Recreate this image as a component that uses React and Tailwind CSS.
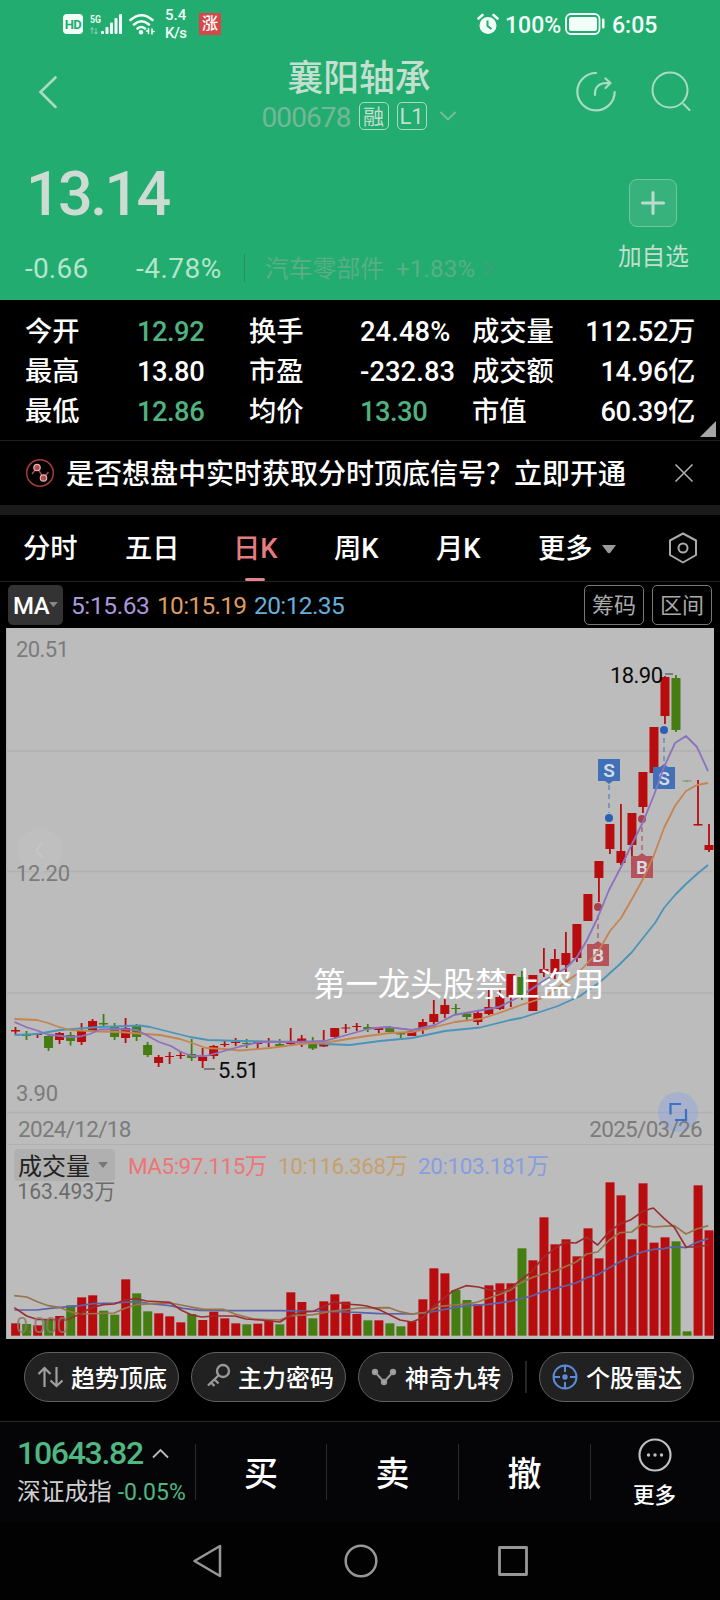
import React from 'react';

// [color, high, body top, body bottom, low]
const candles = [
  ['r', 1027, 1030, 1031.5, 1034], ['g', 1031, 1035, 1036, 1040], ['r', 1033, 1033.5, 1035, 1038],
  ['g', 1035, 1036, 1048, 1051], ['r', 1032, 1033, 1040, 1044], ['g', 1032, 1035, 1041, 1045.5],
  ['r', 1023, 1031, 1042, 1045], ['r', 1019, 1021, 1031, 1032], ['g', 1014, 1023, 1024.5, 1026],
  ['g', 1023, 1026, 1037, 1040], ['r', 1018, 1028, 1038, 1043], ['g', 1024, 1026, 1037, 1041],
  ['g', 1042, 1045, 1055, 1057], ['r', 1055, 1057, 1063, 1067], ['r', 1052, 1056, 1057, 1064],
  ['r', 1051, 1055, 1056, 1059], ['g', 1039, 1054, 1058, 1061], ['r', 1048, 1057, 1061, 1068],
  ['r', 1045, 1046, 1056, 1059], ['r', 1041, 1044, 1045, 1047], ['r', 1038, 1042, 1043, 1046],
  ['g', 1039, 1043, 1044, 1048], ['r', 1041, 1042, 1044, 1049], ['r', 1038, 1041.5, 1043, 1047],
  ['g', 1039, 1044, 1046, 1046], ['r', 1028, 1041, 1044, 1045], ['r', 1035, 1038.5, 1041, 1047],
  ['g', 1037, 1043, 1048.5, 1050], ['r', 1030, 1044, 1046.5, 1047], ['r', 1028, 1028, 1037, 1039],
  ['r', 1024, 1027.5, 1028.5, 1033], ['r', 1023, 1026, 1027, 1031], ['g', 1024, 1027, 1029, 1032],
  ['r', 1027, 1028, 1030, 1033], ['g', 1026, 1028, 1032, 1033], ['g', 1032, 1033, 1034.5, 1038],
  ['r', 1030, 1031, 1036, 1036], ['r', 1019, 1022, 1030, 1034], ['r', 1000, 1014, 1022, 1024],
  ['r', 998, 1005, 1014, 1018], ['g', 1004, 1008, 1009, 1014], ['g', 1012, 1013.5, 1017, 1021],
  ['r', 1011, 1013, 1022, 1025], ['r', 990, 1007, 1014, 1015], ['r', 990, 997, 1009, 1010],
  ['r', 974, 974, 997, 1007], ['g', 971, 977, 997, 1000], ['r', 975, 975, 1011, 1011],
  ['r', 948, 969, 973, 977], ['r', 949, 959, 973, 979], ['r', 932, 953, 965, 973],
  ['r', 924, 924, 958, 962], ['r', 894, 894, 921, 921], ['r', 861, 861, 878, 902],
  ['r', 824, 824, 849, 854], ['r', 804, 851, 863, 865], ['r', 813, 813, 845, 871],
  ['r', 772, 772, 807, 813], ['r', 727, 727, 773, 775], ['r', 676, 677, 716, 724],
  ['g', 675, 678, 730, 732], ['g', 780.5, 780.5, 781.5, 781.5], ['r', 780, 824, 825.5, 825.5],
  ['r', 824, 845, 850, 852],
];

// top of each volume bar, the base line is 587
const volumes = [
  550, 552, 556, 540, 528, 496, 472, 466, 512, 524, 418, 460, 514, 520, 529, 547,
  522, 540, 515, 535, 550, 553, 551, 541, 553, 457, 486, 535, 484, 463, 485, 522,
  541, 541, 550, 559, 544, 478, 385, 400, 450, 480, 493, 436, 430, 430, 325, 361,
  232, 313, 298, 349, 265, 355, 127, 166, 298, 130, 308, 292, 304, 574, 136, 271,
];
const greenVolumes = [1, 3, 5, 8, 9, 11, 12, 16, 21, 24, 27, 32, 34, 35, 40, 41, 46, 60, 61];

const fill = { r: '#b80c0f', g: '#467d13' };

const ma5 = '14.5,1022 26,1027 37,1030.5 48,1034.5 70,1037 80,1036.5 90,1034 100,1029.5 118,1029 137,1030 148,1036 159,1042 171,1046 181,1052 192,1056 206,1056 217,1053 240,1046.5 260,1042 295,1042 325,1041 343,1036 370,1028.5 387,1027 412,1030 435,1025 454,1015 480,1010.5 499,1007 521,996 545,980 566,968 577,957 587,940 598,917 609,890 621,867 632,844 643,822 654,795 664,767 675,743 686,736 697,747 708,771';
const ma10 = '14.5,1019 37,1020 48,1023 59,1027 70,1030 100,1031.5 120,1032 145,1034 160,1035 180,1039 192,1043 206,1048 225,1049 240,1050.5 270,1048 300,1044 330,1042 360,1037 390,1033 412,1032 435,1027 455,1022 480,1019 499,1013 521,1005 543,998 560,986 577,974 598,952 610,931 621,918 632,899 643,879 654,855 664,828 675,806 686,791 697,785 708,783';
const ma20 = '14.5,1035 37,1034 60,1030 100,1027 140,1025.5 150,1027 170,1032 190,1037 208,1040 240,1041 300,1042 325,1044 350,1045 380,1041 412,1038 445,1031 480,1027.5 510,1020 521,1018 540,1012 558,1006 580,996 600,982 620,964 632,952 643,938 655,923 664,908 675,895 686,884 697,874 708,865';

const vol5 = '43,503 80,528 110,538 200,540 240,522 277,502 310,494 343,492 375,480 408,476 440,483 510,487 543,510 575,525 605,531 640,528 705,528 738,537 780,540 840,546 873,525 905,516 940,514 970,500 1003,485 1035,492 1080,495 1100,498 1135,508 1170,525 1200,540 1235,546 1265,535 1295,505 1330,475 1360,452 1398,437 1435,441 1465,449 1500,456 1530,445 1560,422 1595,395 1630,352 1665,325 1695,307 1728,309 1760,291 1793,315 1828,275 1860,252 1893,239 1930,213 1960,204 1992,235 2023,262 2058,321 2090,321 2125,315';
const vol10 = '43,467 80,471 112,485 145,497 178,502 210,515 240,522 343,519 375,505 408,494 460,491 510,489 543,495 610,508 670,508 705,522 760,537 840,540 873,527 940,524 1000,513 1080,504 1168,503 1200,515 1235,522 1280,517 1315,500 1360,495 1398,492 1430,487 1465,475 1500,463 1530,451 1560,430 1595,413 1630,402 1665,393 1695,380 1728,366 1760,342 1793,336 1828,300 1860,278 1895,276 1926,252 1960,261 2023,257 2058,282 2090,267 2125,257';
const vol20 = '43,510 110,510 150,505 240,497 280,491 343,489 408,485 460,492 510,497 550,505 600,511 690,512 840,512 905,513 1040,516 1080,518 1140,521 1235,522 1295,516 1350,505 1400,497 1465,493 1530,484 1595,468 1630,454 1665,446 1728,429 1760,413 1793,404 1828,383 1860,365 1926,336 1960,328 1992,326 2023,320 2058,323 2090,307 2125,296';

const StatusBar = () => (
  <div className="flex h-12 items-center pl-[63px] pr-[64px] text-[#f2fff9]">
    <div className="flex h-5 w-5 items-center justify-center rounded bg-[#f2fff9] text-[13px] font-bold leading-none tracking-[-0.5px] text-[#22ac6f]">HD</div>
    <svg className="ml-[6px]" width="34" height="24" viewBox="89 12 34 24" fill="#f2fff9">
      <text x="90" y="23" fontSize="11" fontWeight="600" textLength="11" lengthAdjust="spacingAndGlyphs">5G</text>
      <g opacity="0.45">
        <path d="M92 28v6M90.5 29.5l1.5-2 1.5 2M96 28v6M94.5 32l1.5 2 1.5-2" stroke="#f2fff9" strokeWidth="1" fill="none" />
      </g>
      <rect x="101" y="31" width="3" height="3" rx="1" />
      <rect x="105.500" y="27" width="3" height="7" rx="1" />
      <rect x="110" y="22.500" width="3" height="11.500" rx="1" />
      <rect x="114.500" y="18" width="3" height="16" rx="1" />
      <rect x="119" y="14" width="3" height="20" rx="1" />
    </svg>
    <svg className="ml-[5px]" width="28" height="24" viewBox="128 12 28 24" fill="none" stroke="#f2fff9" strokeWidth="2.600" strokeLinecap="round">
      <path d="M130.500 20Q141.500 10.500 152.500 20M134 24.500Q141.500 18 149 24.500M137.500 28.500Q141 25.500 145 28.500" />
      <circle cx="141" cy="32.300" r="1" fill="#f2fff9" />
      <path d="M148.500 28.500v5M152 29v5M146.500 31h1M153.500 31.500h.5" strokeWidth="1.600" />
    </svg>
    <div className="ml-[9px] w-[24px] text-[15px] font-medium leading-[18px]">
      <div>5.4</div>
      <div className="tracking-[-0.5px]">K/s</div>
    </div>
    <div className="ml-[10px] flex h-[22px] w-[22px] items-center justify-center bg-[#d6474a] text-[16px] font-medium leading-none text-white">涨</div>
    <div className="ml-auto flex items-center">
      <svg width="22" height="22" viewBox="0 0 22 22">
        <circle cx="11" cy="12.500" r="8.500" fill="#f2fff9" />
        <path d="M1.500 5.500L5.500 2M20.500 5.500L16.500 2" stroke="#f2fff9" strokeWidth="2.600" strokeLinecap="round" />
        <path d="M10.500 7.500v5.500l4 3" stroke="#22ac6f" strokeWidth="2" fill="none" />
      </svg>
      <span className="ml-[6px] mt-[2px] w-[55px] whitespace-nowrap text-[23px] font-medium leading-none">100%</span>
      <svg className="ml-[5px]" width="41" height="22" viewBox="0 0 41 22">
        <rect x="1" y="1" width="33.500" height="20" rx="5" fill="none" stroke="#f2fff9" strokeWidth="1.800" />
        <rect x="4" y="4" width="28" height="14" rx="2.500" fill="#f2fff9" />
        <rect x="37" y="5.500" width="2.500" height="10" rx="1" fill="#f2fff9" />
      </svg>
      <span className="ml-[6px] mt-[2px] w-[44px] text-[23px] font-medium leading-none">6:05</span>
    </div>
  </div>
);

const Header = () => (
  <header className="h-[300px] bg-[#22ac6f] text-[#c3dfd0]">
    <StatusBar />
    <div className="flex h-[88px] justify-between pl-[38px] pr-[28px]">
      <svg className="mt-7" width="20" height="34" viewBox="38 76 20 34" fill="none" stroke="#a9dcc3" strokeWidth="2.600" strokeLinecap="round">
        <path d="M55.500 77.500L40.500 92L55.500 107" />
      </svg>
      <div className="ml-[86px] flex flex-col items-center">
        <div className="mt-[13px] text-[35.8px] font-medium leading-[36px]">襄阳轴承</div>
        <div className="mt-[4px] flex h-[30px] items-center">
          <span className="mt-[3px] text-[28px] leading-none tracking-[-0.9px] text-[#74b798]">000678</span>
          <span className="ml-2 flex h-[28px] w-[30px] items-center justify-center rounded-[5px] border border-[#a9dcc3] pt-[2px] text-[21px] leading-none">融</span>
          <span className="ml-2 flex h-[28px] w-[30px] items-center justify-center rounded-[5px] border border-[#a9dcc3] pt-px text-[22px] leading-none">L1</span>
          <svg className="ml-3" width="18" height="12" viewBox="0 0 18 12" fill="none" stroke="#74bd9b" strokeWidth="1.800">
            <path d="M1.500 2L9 9.500L16.500 2" />
          </svg>
        </div>
      </div>
      <div className="flex">
        <svg className="mt-[20px]" width="44" height="46" viewBox="574 68 44 46" fill="none" stroke="#a9dcc3" strokeWidth="2.200" strokeLinecap="round" strokeLinejoin="round">
          <path d="M596 73A18.700 18.700 0 1 0 614.700 92" />
          <path d="M595 95C594.500 86 600 82.500 610 83M605.500 78.500L610.500 83L605.500 88" />
        </svg>
        <svg className="ml-8" width="42" height="66" viewBox="650 48 42 66" fill="none" stroke="#a9dcc3" strokeWidth="2" strokeLinecap="round">
          <circle cx="670" cy="90" r="17.500" />
          <path d="M683.500 104L689.500 110" />
        </svg>
      </div>
    </div>
    <div className="flex h-[164px] justify-between pl-[25px] pr-[31px]">
      <div>
        <div className="ml-[1px] mt-[27px] text-[61px] font-medium leading-[62px] tracking-[-2.6px] text-[#cddcd3]">13.14</div>
        <div className="mt-[28px] flex h-[30px] items-center text-[28px] leading-none">
          <span className="mt-[2px] w-[111px] tracking-[0.2px] text-[#b5e5cd]">-0.66</span>
          <span className="mt-[2px] w-[108px] tracking-[0.5px] text-[#b5e5cd]">-4.78%</span>
          <span className="h-7 w-px bg-[#2b8a60]" />
          <span className="ml-[20px] mt-[3px] text-[23.8px] text-[#5aae86]">汽车零部件</span>
          <span className="ml-[12px] mt-[2px] text-[24px] tracking-[0.2px] text-[#5aae86]">+1.83%</span>
          <svg className="ml-[8px]" width="12" height="18" viewBox="0 0 12 18" fill="none" stroke="#469f79" strokeWidth="1.800">
            <path d="M2 2L9 9L2 16" />
          </svg>
        </div>
      </div>
      <div className="flex flex-col items-center">
        <div className="mt-[43px] flex h-12 w-12 items-center justify-center rounded-lg border border-[#6fc79f] bg-[#38b27c]">
          <svg width="26" height="26" viewBox="0 0 26 26" stroke="#b9dccb" strokeWidth="3" strokeLinecap="round">
            <path d="M2.500 13H23.500M13 2.500V23.500" />
          </svg>
        </div>
        <div className="mt-[17px] text-[23.7px] leading-[26px]">加自选</div>
      </div>
    </div>
  </header>
);

const stats = [
  ['今开', '12.92', true, '换手', '24.48%', false, '成交量', '112.52万'],
  ['最高', '13.80', false, '市盈', '-232.83', false, '成交额', '14.96亿'],
  ['最低', '12.86', true, '均价', '13.30', true, '市值', '60.39亿'],
];

const Stats = () => (
  <section className="relative h-[141px] border-b border-[#1f1f1f] pt-[13px]">
    {stats.map((row) => (
      <div key={row[0]} className="grid h-10 grid-cols-[112px_112px_111px_112px_1fr] items-center whitespace-nowrap pl-[25px] pr-[25px] text-[27.3px] font-medium leading-none">
        <span>{row[0]}</span>
        <span className={row[2] ? 'tracking-[-0.5px] text-[#4fb381]' : 'tracking-[-0.5px]'}>{row[1]}</span>
        <span>{row[3]}</span>
        <span className={row[5] ? 'tracking-[-0.5px] text-[#4fb381]' : 'tracking-[0.1px]'}>{row[4]}</span>
        <div className="flex justify-between">
          <span>{row[6]}</span>
          <span className="tracking-[-0.4px]">{row[7]}</span>
        </div>
      </div>
    ))}
    <svg className="absolute bottom-[3px] right-1" width="16" height="16" viewBox="0 0 16 16">
      <path d="M16 0V16H0Z" fill="#a6a6a6" />
    </svg>
  </section>
);

const Promo = () => (
  <section className="flex h-[64px] items-center pl-[25px] pr-[26px]">
    <svg width="30" height="30" viewBox="0 0 30 30" fill="none">
      <circle cx="15" cy="15" r="13.300" stroke="#a63c3f" strokeWidth="1.500" />
      <path d="M7 16L12 9.500L18.500 20L23.500 14" stroke="#b04a4c" strokeWidth="1.500" />
      <circle cx="12" cy="9.500" r="3.200" fill="#b9494b" stroke="#ddb8b8" strokeWidth="1.200" />
      <circle cx="18.500" cy="20" r="3.200" fill="#b9494b" stroke="#ddb8b8" strokeWidth="1.200" />
    </svg>
    <span className="ml-[11px] mt-1 whitespace-nowrap text-[28px] font-medium leading-none">是否想盘中实时获取分时顶底信号？立即开通</span>
    <svg className="ml-auto" width="20" height="20" viewBox="0 0 20 20" stroke="#b0b0b0" strokeWidth="1.600">
      <path d="M1.500 1.500L18.500 18.500M18.500 1.500L1.500 18.500" />
    </svg>
  </section>
);

const Tabs = () => (
  <nav className="flex h-[67px] items-center border-b border-[#222] pl-[23px] text-[27.3px] font-medium leading-none">
    <span className="w-[102px] pt-1">分时</span>
    <span className="w-[108px] pt-1">五日</span>
    <span className="relative flex h-full w-[101px] items-center pt-1 text-[#e67b80]">
      日K
      <i className="absolute bottom-0 left-[12px] h-[3px] w-5 rounded bg-[#e0868a]" />
    </span>
    <span className="w-[102px] pt-1">周K</span>
    <span className="w-[102px] pt-1">月K</span>
    <span className="pt-1">更多</span>
    <svg className="ml-2 mt-[2px]" width="16" height="10" viewBox="0 0 16 10" fill="#9a9a9a">
      <path d="M1 1H15L9.500 8.500Q8 10 6.500 8.500Z" />
    </svg>
    <svg className="ml-[51px]" width="30" height="34" viewBox="0 0 30 34" fill="none" stroke="#aaa" strokeWidth="2" strokeLinejoin="round">
      <path d="M15 2.500L28 9.500V24L15 31.500L2 24V9.500Z" />
      <circle cx="15" cy="17" r="4.500" />
    </svg>
  </nav>
);

const Averages = () => (
  <div className="flex h-[46px] items-start pl-2 pr-2 pt-[3px]">
    <div className="flex h-10 w-[55px] items-center rounded-[5px] bg-[#333] pl-[5px] text-[24px] font-medium leading-none">
      <span className="w-[36px] pt-[2px] tracking-[-0.5px]">MA</span>
      <svg width="9" height="6" viewBox="0 0 10 7" fill="#888">
        <path d="M0 0H10L5 6Z" />
      </svg>
    </div>
    <div className="flex h-10 items-center whitespace-nowrap pt-[2px] text-[24.5px] leading-none tracking-[-0.4px]">
      <span className="ml-2 w-[86px]  text-[#ab98dc]">5:15.63</span>
      <span className="w-[97px] tracking-[-0.7px] text-[#dd9a65]">10:15.19</span>
      <span className="tracking-[-0.6px] text-[#66aedb]">20:12.35</span>
    </div>
    <div className="ml-auto flex gap-2 text-[22px] leading-none text-[#a9a9a9]">
      <span className="flex h-10 w-[60px] items-center justify-center rounded-[5px] border border-[#777] pt-[2px]">筹码</span>
      <span className="flex h-10 w-[60px] items-center justify-center rounded-[5px] border border-[#777] pt-[2px]">区间</span>
    </div>
  </div>
);

const Marker = ({ x, box, dot, label, color, down }) => (
  <g>
    <line x1={x} x2={x} y1={down ? box + 26 : dot + 8} y2={down ? dot - 5 : box - 3} stroke={label === 'S' ? '#6389bd' : '#b0666c'} strokeWidth="1.500" strokeDasharray="5 4" />
    <circle cx={x} cy={dot} r="4" fill={label === 'S' ? '#2a60b3' : '#ac3f4a'} />
    <g fill={color}>
      <rect x={x - 11} y={box} width="22" height="22" />
      <path d={down ? `M${x - 4} ${box + 22}h8l-4 3z` : `M${x - 4} ${box}h8l-4 -3z`} />
    </g>
    <text x={x} y={box + 18} fontSize="19" fontWeight="600" fill="#d5dbe4" textAnchor="middle">{label}</text>
  </g>
);

const PriceChart = () => (
  <svg className="relative block overflow-visible" width="708" height="485" viewBox="6 628 708 485">
    <path d="M6 751H713M6 871.500H713M6 993H713M6 1112.500H713" stroke="#b0b0b0" strokeWidth="1.300" />
    <circle cx="40" cy="850" r="22" fill="#bfbfbf" />
    <path d="M43 842L36 850L43 858" fill="none" stroke="#c6c6c6" strokeWidth="1.500" />
    {candles.map(([c, high, top, bottom, low], i) => {
      const x = 15.5 + i * 11.008;
      return (
        <g key={i} fill={fill[c]} opacity={i === 61 ? 0.6 : 1}>
          <rect x={x - 0.9} y={high} width="1.800" height={low - high} />
          <rect x={x - 4.5} y={top} width="9" height={bottom - top} />
        </g>
      );
    })}
    <Marker x={609} box={759} dot={818} label="S" color="#4270b8" down />
    <Marker x={664} box={767} dot={730} label="S" color="#4270b8" />
    <Marker x={642} box={856} dot={819} label="B" color="#b5525a" />
    <Marker x={598} box={944} dot={907} label="B" color="#b5525a" />
    <g fill="none" strokeWidth="1.800" strokeLinejoin="round">
      <polyline points={ma20} stroke="#4a94ba" />
      <polyline points={ma10} stroke="#c58450" />
      <polyline points={ma5} stroke="#8a72bd" />
    </g>
    <g fontSize="22" fill="#7b7b7b">
      <text x="16" y="657" textLength="53">20.51</text>
      <text x="16" y="881" textLength="54">12.20</text>
      <text x="16" y="1101" textLength="42">3.90</text>
    </g>
    <g fontSize="22" fill="#0a0a0a">
      <text x="610" y="683" textLength="53">18.90</text>
      <text x="218" y="1078" textLength="41">5.51</text>
    </g>
    <path d="M665 674H673M204 1069H215" stroke="#666" strokeWidth="1.600" />
    <text x="313" y="996" fontSize="32.400" fill="#fff">第一龙头股禁止盗用</text>
    <circle cx="678" cy="1112" r="20" fill="#8fa5dd" opacity="0.45" />
    <path d="M670.500 1114.500V1104H681M686 1109V1120H675" fill="none" stroke="#3b6fc8" strokeWidth="2.200" />
  </svg>
);

const VolumeChart = () => (
  <svg className="block overflow-visible" width="708" height="158" viewBox="18 123 2124 474">
    <text x="52" y="177" fontSize="64" fill="#6c6c6c" textLength="294" lengthAdjust="spacingAndGlyphs">163.493万</text>
    {volumes.map((top, i) => (
      <rect key={i} x={46.5 + i * 33.02 - 13} y={top} width="27" height={587 - top} fill={greenVolumes.includes(i) ? fill.g : fill.r} />
    ))}
    <g fill="none" strokeWidth="5" strokeLinejoin="round">
      <polyline points={vol20} stroke="#5b63a8" />
      <polyline points={vol10} stroke="#97744a" />
      <polyline points={vol5} stroke="#9c2d30" />
    </g>
    <text x="48" y="578" fontSize="64" fill="#8b7b6b" fillOpacity="0.850" textLength="158">0.000</text>
  </svg>
);

const Chart = () => (
  <section className="ml-[6px] h-[711px] w-[708px] border-l border-[#aeaeae] bg-[#bcbcbc]">
    <div className="-ml-px">
      <PriceChart />
      <div className="relative flex h-[32px] items-center justify-between border-b border-[#b0b0b0] pl-[12px] pr-[12px] pt-[2px] text-[22.5px] leading-none tracking-[-0.7px] text-[#7b7b7b]">
        <span>2024/12/18</span>
        <span>2025/03/26</span>
      </div>
      <div className="flex h-[36px] items-start whitespace-nowrap pl-2 pt-1 text-[22.5px] leading-none">
        <div className="flex h-8 w-[101px] items-center rounded bg-[#b0b0b0] pl-1 text-[24px] text-[#222]">
          <span className="pt-[3px]">成交量</span>
          <svg className="ml-[8px]" width="10" height="6" viewBox="0 0 10 6" fill="#777">
            <path d="M0 0H10L5 6Z" />
          </svg>
        </div>
        <span className="ml-[13px] flex h-8 w-[150px] items-center pt-[2px] tracking-[-0.5px] text-[#ee7476]">MA5:97.115万</span>
        <span className="flex h-8 w-[140px] items-center pt-[2px] tracking-[-0.5px] text-[#c6a16b]">10:116.368万</span>
        <span className="flex h-8 items-center pt-[2px] tracking-[-0.4px] text-[#869de0]">20:103.181万</span>
      </div>
      <VolumeChart />
    </div>
  </section>
);

const Pill = ({ icon, label }) => (
  <div className="flex h-[50px] w-[155px] items-center rounded-full border border-[#606060] bg-[#212121] pl-[12px]">
    {icon}
    <span className="ml-[8px] mt-[3px] whitespace-nowrap text-[24px] font-medium leading-none">{label}</span>
  </div>
);

const Tools = () => (
  <div className="flex h-[82px] items-start pl-6 pt-[13px]">
    <div className="flex gap-3">
      <Pill
        label="趋势顶底"
        icon={
          <svg width="26" height="24" viewBox="0 0 26 24" fill="none" stroke="#a0a0a0" strokeWidth="2.200">
            <path d="M7.500 22V3M1.500 9L7.500 3L13.500 9M19.500 2V21M13.500 15.500L19.500 21L25.500 15.500" />
          </svg>
        }
      />
      <Pill
        label="主力密码"
        icon={
          <svg className="ml-[2px] mr-[-1px] mb-1" width="25" height="25" viewBox="0 0 25 25" fill="none" stroke="#999" strokeWidth="2.400">
            <circle cx="17" cy="8" r="6" />
            <path d="M12.500 12.500L2 22.500M8.500 16.500L12.500 20.500M5 19.500L8.500 23" />
          </svg>
        }
      />
      <Pill
        label="神奇九转"
        icon={
          <svg width="26" height="24" viewBox="0 0 26 24" fill="#a9a9a9" stroke="#999" strokeWidth="2">
            <path d="M4 7L13 17L22 7" fill="none" />
            <circle cx="4" cy="7" r="2.200" />
            <circle cx="13" cy="17" r="2.200" />
            <circle cx="22" cy="7" r="2.200" />
          </svg>
        }
      />
    </div>
    <i className="ml-3 mr-3 mt-[9px] h-8 w-[2px] bg-[#262626]" />
    <Pill
      label="个股雷达"
      icon={
        <svg width="26" height="26" viewBox="0 0 26 26" fill="none" stroke="#5b8bd8" strokeWidth="2">
          <circle cx="13" cy="13" r="11.500" />
          <path d="M13 1.500V8M13 18V24.500M1.500 13H8M18 13H24.500" />
          <circle cx="13" cy="13" r="1.700" fill="#5b8bd8" />
        </svg>
      }
    />
  </div>
);

const TradeBar = () => (
  <footer className="flex h-[101px] border-t border-[#2b2b2d] bg-[#050508]">
    <div className="w-[195px] shrink-0 whitespace-nowrap pl-[17px] pt-[14px]">
      <div className="flex h-[34px] items-center text-[32px] font-medium leading-none tracking-[-1.3px] text-[#4fb781]">
        10643.82
        <svg className="ml-[9px]" width="17" height="11" viewBox="0 0 17 11" fill="none" stroke="#bbb" strokeWidth="1.800">
          <path d="M1 9.500L8.500 2L16 9.500" />
        </svg>
      </div>
      <div className="mt-[8px] flex h-[28px] items-center leading-none">
        <span className="mt-[2px] text-[23.7px] text-[#cfcfcf]">深证成指</span>
        <span className="ml-[6px] text-[23px] text-[#4fb781]">-0.05%</span>
      </div>
    </div>
    <div className="mt-[22px] flex h-14 items-center text-[34px] font-medium leading-none">
      <span className="flex h-full w-[131px] items-center justify-center border-l border-[#2b2b2b] pt-1">买</span>
      <span className="flex h-full w-[132px] items-center justify-center border-l border-[#2b2b2b] pt-1">卖</span>
      <span className="flex h-full w-[132px] items-center justify-center border-l border-[#2b2b2b] pt-1">撤</span>
      <span className="h-full w-px bg-[#2b2b2b]" />
    </div>
    <div className="flex grow flex-col items-center pr-[2px] pt-[16px]">
      <svg width="34" height="34" viewBox="0 0 34 34" fill="#c0c0c0">
        <circle cx="17" cy="17" r="15.500" fill="none" stroke="#c0c0c0" strokeWidth="2.200" />
        <circle cx="10.500" cy="17" r="1.700" />
        <circle cx="17" cy="17" r="1.700" />
        <circle cx="23.500" cy="17" r="1.700" />
      </svg>
      <span className="mt-[12px] text-[21.5px] font-medium leading-[24px]">更多</span>
    </div>
  </footer>
);

const SystemNav = () => (
  <div className="flex h-[78px] items-center justify-center bg-[#020202]">
    <svg width="32" height="36" viewBox="0 0 32 36" fill="none" stroke="#979797" strokeWidth="2.500" strokeLinejoin="round">
      <path d="M29 3V33L3.500 18Z" />
    </svg>
    <svg className="ml-[121px] mr-[119px]" width="34" height="34" viewBox="0 0 34 34" fill="none" stroke="#979797" strokeWidth="2.500">
      <circle cx="17" cy="17" r="15.300" />
    </svg>
    <svg width="32" height="32" viewBox="0 0 32 32" fill="none" stroke="#979797" strokeWidth="2.800" strokeLinejoin="round">
      <rect x="2.500" y="2.500" width="27" height="27" />
    </svg>
  </div>
);

const App = () => {
  return (
    <div className="h-[1600px] w-[720px] overflow-hidden bg-black text-white [font-family:Roboto,'Noto_Sans_CJK_SC',sans-serif]">
      <Header />
      <Stats />
      <Promo />
      <div className="h-[10px] bg-[#1a1a1a]" />
      <Tabs />
      <Averages />
      <Chart />
      <Tools />
      <TradeBar />
      <SystemNav />
    </div>
  );
};

export default App;
